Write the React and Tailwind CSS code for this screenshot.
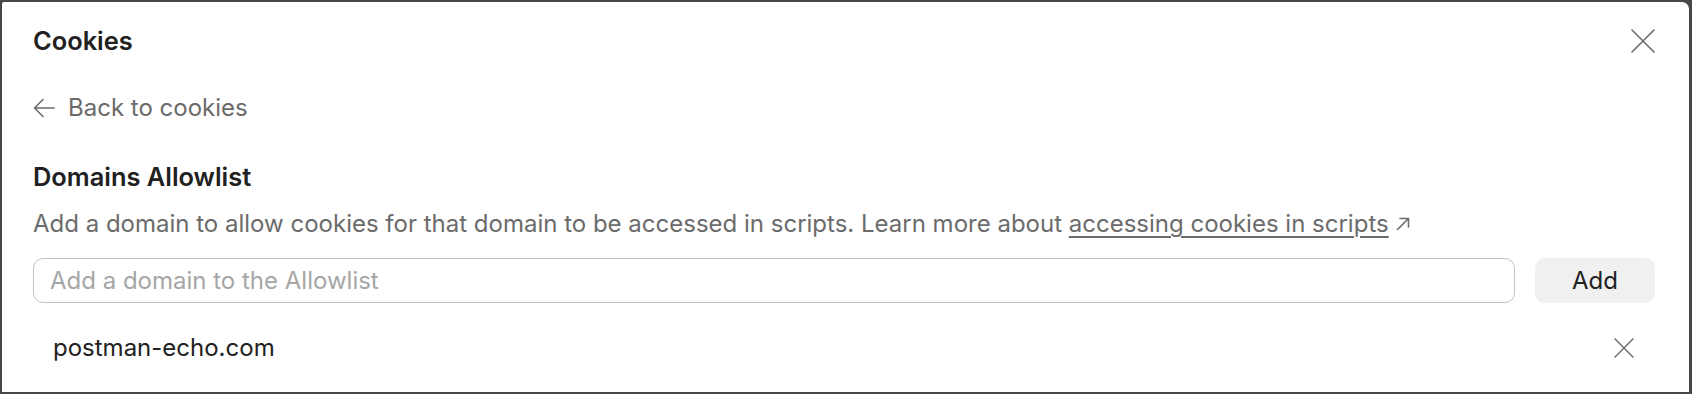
const domains = ["postman-echo.com"];

function CloseIcon({ size, className }) {
    return (
        <svg width={size} height={size} viewBox="0 0 24 24" fill="none" stroke="currentColor" strokeWidth="1.6" strokeLinecap="round" className={className}>
            <path d="M1 1L23 23M23 1L1 23" />
        </svg>
    );
}

export default function App() {
    return (
        <div className="h-[394px] w-full bg-[#474747] pb-[2px] pl-[2px] pr-[3px] pt-[2px] font-['Inter',sans-serif]">
            <div className="h-full w-full overflow-hidden rounded-tl-[2px] rounded-tr-[7px] bg-white pl-[31px] pr-[34px]">
                <div className="mt-[19px] flex h-[40px] items-center justify-between">
                    <h1 className="text-[25.4px] font-semibold leading-[40px] text-[#212121]">Cookies</h1>
                    <button className="text-[#6b6b6b]">
                        <CloseIcon size={24} />
                    </button>
                </div>

                <button className="mt-[31px] flex h-[32px] items-center gap-[13px] text-[24px] leading-[32px] text-[#6b6b6b]">
                    <svg width="22" height="20" viewBox="0 0 22 20" fill="none" stroke="currentColor" strokeWidth="1.6" strokeLinecap="round" strokeLinejoin="round">
                        <path d="M21 10H1.5M10 1.5L1.5 10L10 18.5" />
                    </svg>
                    <span>Back to cookies</span>
                </button>

                <h2 className="mt-[37px] text-[25.4px] font-semibold leading-[32px] text-[#212121]">Domains Allowlist</h2>
                <p className="mt-[15px] flex items-center text-[24px] leading-[32px] text-[#6b6b6b]">
                    <span>
                        Add a domain to allow cookies for that domain to be accessed in scripts. Learn more about{" "}
                        <a className="underline decoration-[1.5px] underline-offset-[4px]">accessing cookies in scripts</a>
                    </span>
                    <svg width="14" height="14" viewBox="0 0 14 14" fill="none" stroke="currentColor" strokeWidth="1.6" strokeLinecap="round" strokeLinejoin="round" className="ml-[7px]">
                        <path d="M1.5 12.5L12.5 1.5M4 1.5H12.5V10" />
                    </svg>
                </p>

                <div className="mt-[18px] flex items-center gap-[20px]">
                    <input
                        className="h-[45px] flex-1 rounded-[10px] border-[1.5px] border-[#c2c2c2] px-[16px] text-[24px] text-[#212121] outline-none placeholder:text-[#a6a6a6]"
                        placeholder="Add a domain to the Allowlist"
                    />
                    <button className="h-[45px] w-[120px] rounded-[10px] bg-[#f0f0f0] text-[24px] text-[#212121]">Add</button>
                </div>

                <div className="mt-[21px]">
                    {domains.map((domain) => (
                        <div key={domain} className="flex h-[48px] items-center justify-between pl-[20px] pr-[21px]">
                            <span className="text-[24px] text-[#212121]">{domain}</span>
                            <CloseIcon size={20} className="text-[#6b6b6b]" />
                        </div>
                    ))}
                </div>
            </div>
        </div>
    );
}
